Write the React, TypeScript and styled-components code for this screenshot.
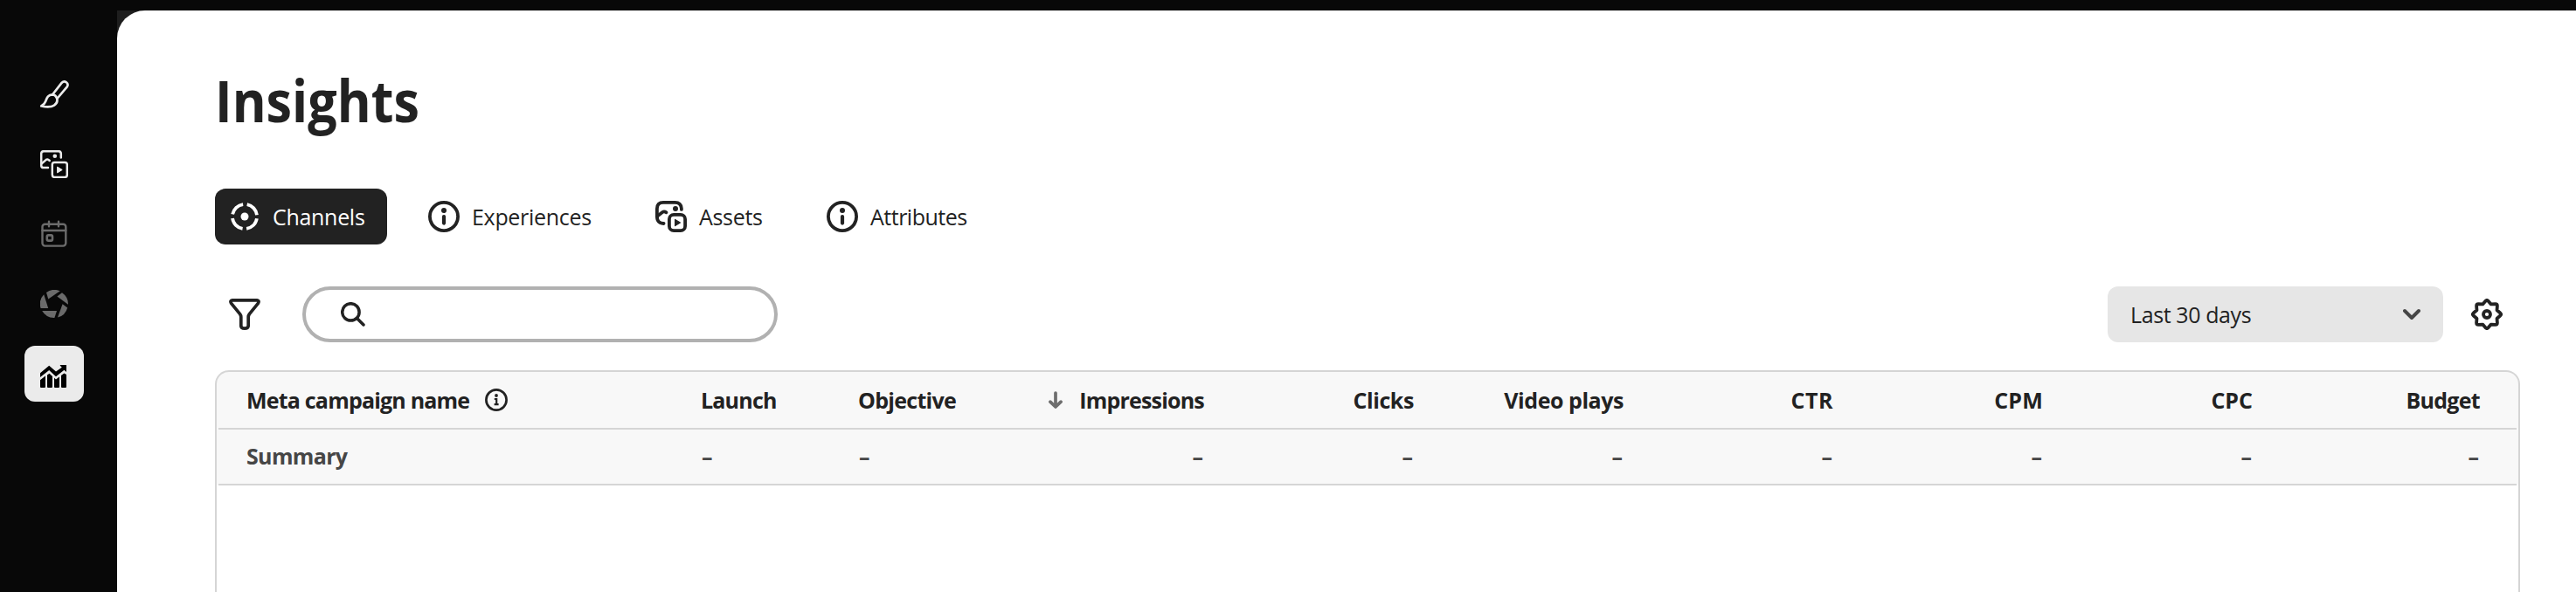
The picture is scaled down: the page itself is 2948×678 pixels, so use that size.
import React from 'react';
import styled, { createGlobalStyle } from 'styled-components';

const GlobalStyle = createGlobalStyle`
  * { box-sizing: border-box; }
  body { margin: 0; background: #080808; font-family: "Open Sans", "Noto Sans", sans-serif; color: #222; overflow: hidden; }
  svg { display: block; flex: none; }
`;

const Shell = styled.div`
  display: flex;
  height: 678px;
  padding-top: 12px;
  background: #080808;
`;

const Sidebar = styled.nav`
  width: 134px;
  flex: none;
  display: flex;
  flex-direction: column;
  gap: 16px;
  padding: 64px 0 0 28px;
`;

const NavItem = styled.a<{ $active?: boolean; $muted?: boolean }>`
  width: 68px;
  height: 64px;
  border-radius: 12px;
  display: flex;
  align-items: center;
  justify-content: center;
  color: ${p => (p.$active ? '#000' : p.$muted ? '#6b6b6b' : '#ebebeb')};
  background: ${p => (p.$active ? '#ebebeb' : 'transparent')};
`;

const Backdrop = styled.div`
  flex: 1;
  min-width: 0;
  background: #1e1e1e;
`;

const Panel = styled.main`
  height: 100%;
  display: flex;
  flex-direction: column;
  padding: 62px 64px 0 112px;
  background: #fff;
  border-top-left-radius: 32px;
  overflow: hidden;
`;

const Title = styled.h1`
  margin: 0;
  width: max-content;
  font-size: 67px;
  font-weight: 700;
  line-height: 80px;
  transform: scaleX(0.885);
  transform-origin: left;
`;

const Label = styled.span<{ $tracking?: number }>`
  letter-spacing: ${p => p.$tracking ?? 0}px;
  white-space: nowrap;
`;

const Tabs = styled.div`
  display: flex;
  margin-top: 62px;
`;

const Tab = styled.button<{ $active?: boolean; $width: number }>`
  width: ${p => p.$width}px;
  height: 64px;
  border: 0;
  border-radius: 12px;
  padding: 0 0 0 ${p => (p.$active ? 18 : 16)}px;
  display: flex;
  align-items: center;
  gap: ${p => (p.$active ? 16 : 14)}px;
  font: 400 25px/34px "Open Sans", "Noto Sans", sans-serif;
  color: ${p => (p.$active ? '#fff' : '#222')};
  background: ${p => (p.$active ? '#222' : 'transparent')};
  & + & { margin-left: 31px; }
`;

const Toolbar = styled.div`
  display: flex;
  align-items: center;
  height: 64px;
  margin-top: 48px;
  padding: 0 20px 0 16px;
`;

const SearchField = styled.div`
  width: 544px;
  height: 64px;
  margin-left: 48px;
  padding-left: 40px;
  display: flex;
  align-items: center;
  border: 4px solid #b1b1b1;
  border-radius: 32px;
`;

const Picker = styled.button`
  width: 384px;
  height: 64px;
  margin: 0 32px 0 auto;
  padding: 0 26px 0 26px;
  border: 0;
  border-radius: 12px;
  display: flex;
  align-items: center;
  justify-content: space-between;
  font: 400 25px/34px "Open Sans", "Noto Sans", sans-serif;
  color: #222;
  background: #e6e6e6;
`;

const Table = styled.div`
  flex: 1;
  margin-top: 32px;
  padding: 0 2px;
  border: 2px solid #d5d5d5;
  border-bottom: 0;
  border-radius: 16px 16px 0 0;
  background: linear-gradient(#f8f8f8 130px, #fff 130px);
`;

const Row = styled.div<{ $summary?: boolean }>`
  height: ${p => (p.$summary ? 64 : 66)}px;
  padding-bottom: ${p => (p.$summary ? 2 : 0)}px;
  border-bottom: 2px solid #d5d5d5;
  display: grid;
  grid-template-columns: 520px 180px 180px 280px repeat(5, 240px) 260px;
  align-items: center;
  font-size: 25px;
  font-weight: 700;
  line-height: 34px;
  color: ${p => (p.$summary ? '#464646' : '#222')};
`;

const Cell = styled.div<{ $end?: boolean; $gap?: number; $empty?: boolean }>`
  display: flex;
  align-items: center;
  justify-content: ${p => (p.$end ? 'flex-end' : 'flex-start')};
  gap: ${p => p.$gap ?? 0}px;
  padding: 0 ${p => (p.$empty ? 33 : 32)}px;
`;

const BrushIcon = () => (
  <svg width="34" height="34" viewBox="0 0 34 34" fill="none" stroke="currentColor" strokeWidth="2.7" strokeLinejoin="round" strokeLinecap="round">
    <path d="M15 17.5L25.8 3.7A3.8 3.8 0 0 1 31.8 8.3L20.3 22" />
    <path d="M15 17.3C9.6 17.3 8.5 21.5 7.2 25C6.2 28 4.4 29.2 2.3 30.5C8 31.7 14 31.6 17 29.6C20.2 27.4 20.9 24.5 20.2 22C19.4 19.2 17.6 17.5 15 17.3Z" />
  </svg>
);

const MediaIcon = () => (
  <svg width="32" height="32" viewBox="0 0 32 32" fill="none" stroke="currentColor" strokeWidth="2.5" strokeLinecap="round" strokeLinejoin="round">
    <path d="M23.8 8.6V4Q23.8 1.2 21 1.2H4Q1.2 1.2 1.2 4V17.3Q1.2 20.1 4 20.1H9" />
    <path d="M1.8 15.2L6.9 10.9Q8.2 10 9.4 10.9L10.8 12" />
    <circle cx="16.8" cy="6.8" r="2.3" fill="currentColor" stroke="none" />
    <rect x="13.8" y="13.9" width="17" height="17" rx="2.6" />
    <path d="M19.9 19.3L25.2 22.5L19.9 25.7Z" fill="currentColor" strokeWidth="1" />
  </svg>
);

const CalendarIcon = () => (
  <svg width="30" height="32" viewBox="-0.5 0 30 32" fill="none" stroke="currentColor" strokeWidth="2.4" strokeLinecap="round">
    <rect x="1" y="4.8" width="26.8" height="24.8" rx="3" />
    <path d="M1 12H27.8M8.5 1.8V7.2M19.5 1.8V7.2" />
    <rect x="6.3" y="17.4" width="6.2" height="6.2" rx="1.6" strokeWidth="2.6" />
  </svg>
);

const ApertureIcon = () => (
  <svg width="32" height="32" viewBox="0 0 32 32" fill="currentColor">
    <path d="M7 3A16 16 0 0 1 22.7 1.3L9.3 10.4Z" />
    <path d="M19.4 7.6L25 3.2A16 16 0 0 1 32 16.8Z" />
    <path d="M25.6 16.2L31.2 20.4A16 16 0 0 1 20 31.6Z" />
    <path d="M2.2 24H19L16.4 32A16 16 0 0 1 2.2 24Z" />
    <path d="M4.2 5.2L9.2 21H.6A16 16 0 0 1 4.2 5.2Z" />
  </svg>
);

const ChartIcon = () => (
  <svg width="32" height="32" viewBox="0 -6 32 32" fill="currentColor">
    <path d="M0 9.2L10.2 .8L18 7.6L24.8 2.8L22.8 .8V0H30V8L27.4 5.8L18 13.2L10.2 6L0 14Z" />
    <path d="M0 17.2L6 12.6V25Q6 26 5 26H1Q0 26 0 25ZM8 11.6L10.5 9.8L14 12.9V25Q14 26 13 26H9Q8 26 8 25ZM16 14.8L18 16.6L22 13.6V25Q22 26 21 26H17Q16 26 16 25ZM24 12L27.4 9.4L30 11V25Q30 26 29 26H25Q24 26 24 25Z" />
  </svg>
);

const ChannelsIcon = () => (
  <svg width="32" height="32" viewBox="0 0 32 32">
    <circle cx="16" cy="16" r="14.1" fill="none" stroke="currentColor" strokeWidth="3.8" strokeDasharray="17.45 4.7" strokeDashoffset="-2.35" />
    <circle cx="16" cy="16" r="4.5" fill="currentColor" />
  </svg>
);

const InfoIcon = () => (
  <svg width="36" height="36" viewBox="0 0 36 36">
    <circle cx="18" cy="18" r="16.1" fill="none" stroke="currentColor" strokeWidth="3.8" />
    <circle cx="18" cy="11" r="3" fill="currentColor" />
    <path d="M18 18V25.6" stroke="currentColor" strokeWidth="4.2" strokeLinecap="round" />
  </svg>
);

const AssetsIcon = () => (
  <svg width="36" height="36" viewBox="0 0 36 36" fill="none" stroke="currentColor" strokeWidth="3.8" strokeLinecap="round">
    <path d="M29.9 9.9V8.8Q29.4 1.9 22.5 1.9H9Q1.9 1.9 1.9 9V18.5Q2.2 25.7 9.6 26" />
    <path d="M3 17L8.1 13Q10.2 11.6 12.4 13.3" />
    <circle cx="23" cy="9" r="3" fill="currentColor" stroke="none" />
    <rect x="15.9" y="15.9" width="18.2" height="18.2" rx="5.2" />
    <path d="M22.6 21.4L28.4 25L22.6 28.6Z" fill="currentColor" strokeWidth="1.2" strokeLinejoin="round" />
  </svg>
);

const FilterIcon = () => (
  <svg width="36" height="36" viewBox="0 0 36 36" fill="none" stroke="currentColor" strokeWidth="3.7" strokeLinejoin="round">
    <path d="M4 1.9H32Q35.2 2.4 33.4 5.4L23.4 17.6Q22.2 19.2 22.2 21V31.2Q21.8 34.1 18 34.1Q13.8 34.1 13.8 31.2V21Q13.8 19.2 12.6 17.6L2.6 5.4Q.8 2.4 4 1.9Z" />
  </svg>
);

const SearchIcon = () => (
  <svg width="28" height="28" viewBox="0 0 28 28" fill="none" stroke="currentColor" strokeWidth="3.5" strokeLinecap="round">
    <circle cx="11.4" cy="11.4" r="9.7" />
    <path d="M18.5 18.5L26 26" />
  </svg>
);

const ChevronIcon = () => (
  <svg width="20" height="14" viewBox="0 0 20 14" fill="none" stroke="#464646" strokeWidth="3.9" strokeLinecap="round" strokeLinejoin="round">
    <path d="M2 3L10 11L18 3" />
  </svg>
);

const polar = (radius: number, step: number) => {
  const angle = (step * Math.PI) / 8;
  return `${(18 + radius * Math.sin(angle)).toFixed(2)} ${(18 - radius * Math.cos(angle)).toFixed(2)}`;
};

const gearOutline =
  `M${polar(12.5, -1)}` +
  Array.from({ length: 8 }, (_, i) => `L${polar(15.4, i * 2 - 0.25)}Q${polar(16.8, i * 2)} ${polar(15.4, i * 2 + 0.25)}L${polar(12.5, i * 2 + 1)}`).join('') +
  'Z';

const GearIcon = () => (
  <svg width="36" height="36" viewBox="0 0 36 36" fill="none" stroke="currentColor" strokeWidth="3.8" strokeLinejoin="round">
    <path d={gearOutline} />
    <circle cx="18" cy="18" r="4" />
  </svg>
);

const SmallInfoIcon = () => (
  <svg width="26" height="26" viewBox="0 0 26 26" fill="none" stroke="currentColor">
    <circle cx="13" cy="13" r="11.6" strokeWidth="2.7" />
    <circle cx="13" cy="8" r="1.9" fill="currentColor" stroke="none" />
    <path d="M10.8 12H13.2V18.2M10.6 18.2H15.6" strokeWidth="2.2" />
  </svg>
);

const SortIcon = () => (
  <svg width="16" height="20" viewBox="0 0 16 20" fill="none" stroke="#6e6e6e" strokeWidth="3.7" strokeLinecap="round" strokeLinejoin="round">
    <path d="M8 2V17.6M1.9 12.2L8 18L14.1 12.2" />
  </svg>
);

const metrics: [string, number][] = [
  ['Clicks', -0.4],
  ['Video plays', -0.45],
  ['CTR', 0.5],
  ['CPM', 0.2],
  ['CPC', 0],
  ['Budget', -0.7],
];

export default function App() {
  return (
    <>
      <GlobalStyle />
      <Shell>
        <Sidebar>
          <NavItem><BrushIcon /></NavItem>
          <NavItem><MediaIcon /></NavItem>
          <NavItem $muted><CalendarIcon /></NavItem>
          <NavItem $muted><ApertureIcon /></NavItem>
          <NavItem $active><ChartIcon /></NavItem>
        </Sidebar>
        <Backdrop>
          <Panel>
            <Title>Insights</Title>
            <Tabs>
              <Tab $active $width={197}><ChannelsIcon /><Label $tracking={-0.3}>Channels</Label></Tab>
              <Tab $width={229}><InfoIcon /><Label $tracking={-0.3}>Experiences</Label></Tab>
              <Tab $width={165}><AssetsIcon /><Label $tracking={-0.3}>Assets</Label></Tab>
              <Tab $width={200}><InfoIcon /><Label $tracking={-0.5}>Attributes</Label></Tab>
            </Tabs>
            <Toolbar>
              <FilterIcon />
              <SearchField><SearchIcon /></SearchField>
              <Picker><Label $tracking={-0.4}>Last 30 days</Label><ChevronIcon /></Picker>
              <GearIcon />
            </Toolbar>
            <Table>
              <Row>
                <Cell $gap={18}><Label $tracking={-0.8}>Meta campaign name</Label><SmallInfoIcon /></Cell>
                <Cell><Label $tracking={-0.8}>Launch</Label></Cell>
                <Cell><Label $tracking={-0.7}>Objective</Label></Cell>
                <Cell $end $gap={19}><SortIcon /><Label $tracking={-0.8}>Impressions</Label></Cell>
                {metrics.map(([name, tracking]) => (
                  <Cell $end key={name}><Label $tracking={tracking}>{name}</Label></Cell>
                ))}
              </Row>
              <Row $summary>
                <Cell><Label $tracking={-0.65}>Summary</Label></Cell>
                <Cell $empty>–</Cell>
                <Cell $empty>–</Cell>
                <Cell $end $empty>–</Cell>
                {metrics.map(([name]) => (
                  <Cell $end $empty key={name}>–</Cell>
                ))}
              </Row>
            </Table>
          </Panel>
        </Backdrop>
      </Shell>
    </>
  );
}
